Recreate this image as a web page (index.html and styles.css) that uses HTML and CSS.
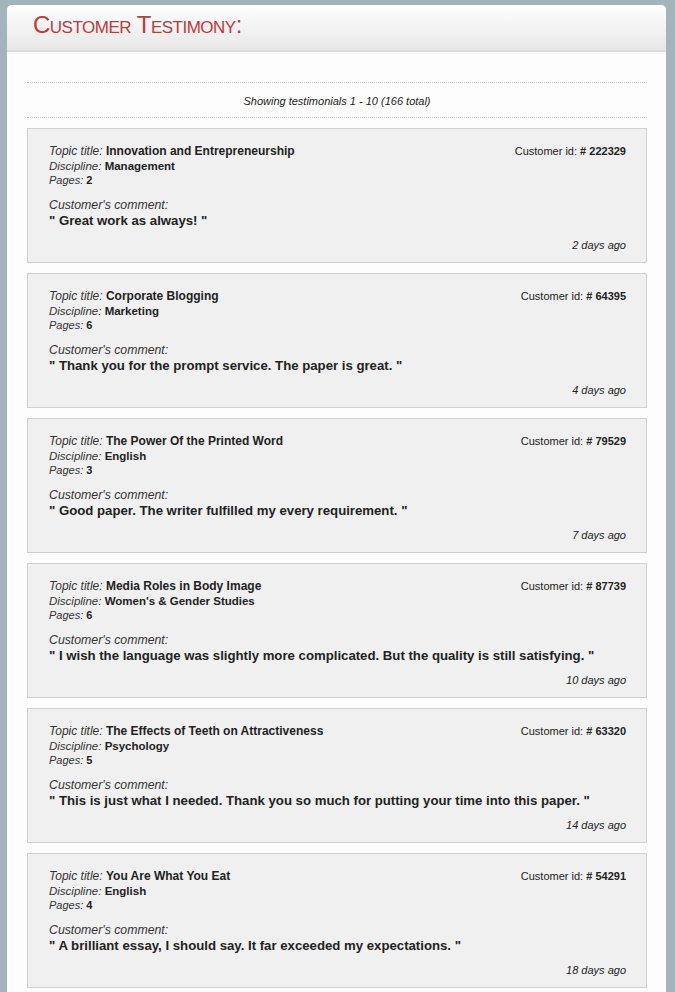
FILE: index.html
```html
<!DOCTYPE html>
<html lang="en">
<head>
    <meta charset="UTF-8">
    <title>Customer Testimony</title>
    <link rel="stylesheet" href="styles.css">
</head>
<body>
<div class="panel">
    <div class="panel-head">
        <h1>Customer Testimony:</h1>
    </div>
    <div class="panel-body">
        <div class="summary">Showing testimonials 1 - 10 (166 total)</div>

        <div class="card">
            <div class="card-top">
                <div class="meta">
                    <div class="topic"><i>Topic title:</i> <b>Innovation and Entrepreneurship</b></div>
                    <div class="disc"><i>Discipline:</i> <b>Management</b></div>
                    <div><i>Pages:</i> <b>2</b></div>
                </div>
                <div class="cid">Customer id: <b># 222329</b></div>
            </div>
            <div class="label">Customer's comment:</div>
            <div class="comment">" Great work as always! "</div>
            <div class="date">2 days ago</div>
        </div>

        <div class="card">
            <div class="card-top">
                <div class="meta">
                    <div class="topic"><i>Topic title:</i> <b>Corporate Blogging</b></div>
                    <div class="disc"><i>Discipline:</i> <b>Marketing</b></div>
                    <div><i>Pages:</i> <b>6</b></div>
                </div>
                <div class="cid">Customer id: <b># 64395</b></div>
            </div>
            <div class="label">Customer's comment:</div>
            <div class="comment">" Thank you for the prompt service. The paper is great. "</div>
            <div class="date">4 days ago</div>
        </div>

        <div class="card">
            <div class="card-top">
                <div class="meta">
                    <div class="topic"><i>Topic title:</i> <b>The Power Of the Printed Word</b></div>
                    <div class="disc"><i>Discipline:</i> <b>English</b></div>
                    <div><i>Pages:</i> <b>3</b></div>
                </div>
                <div class="cid">Customer id: <b># 79529</b></div>
            </div>
            <div class="label">Customer's comment:</div>
            <div class="comment">" Good paper. The writer fulfilled my every requirement. "</div>
            <div class="date">7 days ago</div>
        </div>

        <div class="card">
            <div class="card-top">
                <div class="meta">
                    <div class="topic"><i>Topic title:</i> <b>Media Roles in Body Image</b></div>
                    <div class="disc"><i>Discipline:</i> <b>Women's &amp; Gender Studies</b></div>
                    <div><i>Pages:</i> <b>6</b></div>
                </div>
                <div class="cid">Customer id: <b># 87739</b></div>
            </div>
            <div class="label">Customer's comment:</div>
            <div class="comment">" I wish the language was slightly more complicated. But the quality is still satisfying. "</div>
            <div class="date">10 days ago</div>
        </div>

        <div class="card">
            <div class="card-top">
                <div class="meta">
                    <div class="topic"><i>Topic title:</i> <b>The Effects of Teeth on Attractiveness</b></div>
                    <div class="disc"><i>Discipline:</i> <b>Psychology</b></div>
                    <div><i>Pages:</i> <b>5</b></div>
                </div>
                <div class="cid">Customer id: <b># 63320</b></div>
            </div>
            <div class="label">Customer's comment:</div>
            <div class="comment">" This is just what I needed. Thank you so much for putting your time into this paper. "</div>
            <div class="date">14 days ago</div>
        </div>

        <div class="card">
            <div class="card-top">
                <div class="meta">
                    <div class="topic"><i>Topic title:</i> <b>You Are What You Eat</b></div>
                    <div class="disc"><i>Discipline:</i> <b>English</b></div>
                    <div><i>Pages:</i> <b>4</b></div>
                </div>
                <div class="cid">Customer id: <b># 54291</b></div>
            </div>
            <div class="label">Customer's comment:</div>
            <div class="comment">" A brilliant essay, I should say. It far exceeded my expectations. "</div>
            <div class="date">18 days ago</div>
        </div>
    </div>
</div>
</body>
</html>
```

FILE: styles.css
```css
* {
    margin: 0;
    padding: 0;
}

body {
    background-color: #a4b4bb;
    font-family: "Liberation Sans", Arial, sans-serif;
    color: #222;
    padding: 5px 9px 0 7px;
}

.panel {
    width: 659px;
    background-color: #fdfdfd;
    border-radius: 5px 5px 0 0;
}

.panel-head {
    height: 45px;
    border-bottom: 2px solid #dcdcdc;
    border-radius: 5px 5px 0 0;
    background: linear-gradient(#ffffff, #e7e7e7);
    padding-left: 26px;
}

.panel-head h1 {
    font-weight: normal;
    font-size: 24px;
    font-variant: small-caps;
    letter-spacing: -0.5px;
    color: #c0393b;
    line-height: 40px;
}

.panel-body {
    padding: 30px 19px 20px 20px;
}

.summary {
    border-top: 1px dotted #c8c8c8;
    border-bottom: 1px dotted #c8c8c8;
    height: 34px;
    line-height: 36px;
    text-align: center;
    font-size: 11px;
    font-style: italic;
    color: #222;
    margin-bottom: 10px;
}

.card {
    background-color: #f0f0f0;
    border: 1px solid #d0d0d0;
    padding: 15px 20px 10px 21px;
    margin-bottom: 10px;
}

.card-top {
    display: flex;
    justify-content: space-between;
}

.meta {
    font-size: 11px;
    line-height: 14px;
}

.meta i {
    color: #333;
}

.meta .topic {
    font-size: 12px;
    line-height: 15px;
}

.meta .disc {
    font-size: 11.5px;
}

.cid {
    font-size: 11px;
    line-height: 15px;
    color: #222;
}

.label {
    margin-top: 10px;
    font-size: 12.3px;
    font-style: italic;
    line-height: 16px;
    color: #333;
}

.comment {
    font-size: 13.2px;
    font-weight: bold;
    line-height: 16px;
    color: #222;
}

.date {
    margin-top: 9px;
    text-align: right;
    font-size: 11px;
    font-style: italic;
    line-height: 14px;
}
```
